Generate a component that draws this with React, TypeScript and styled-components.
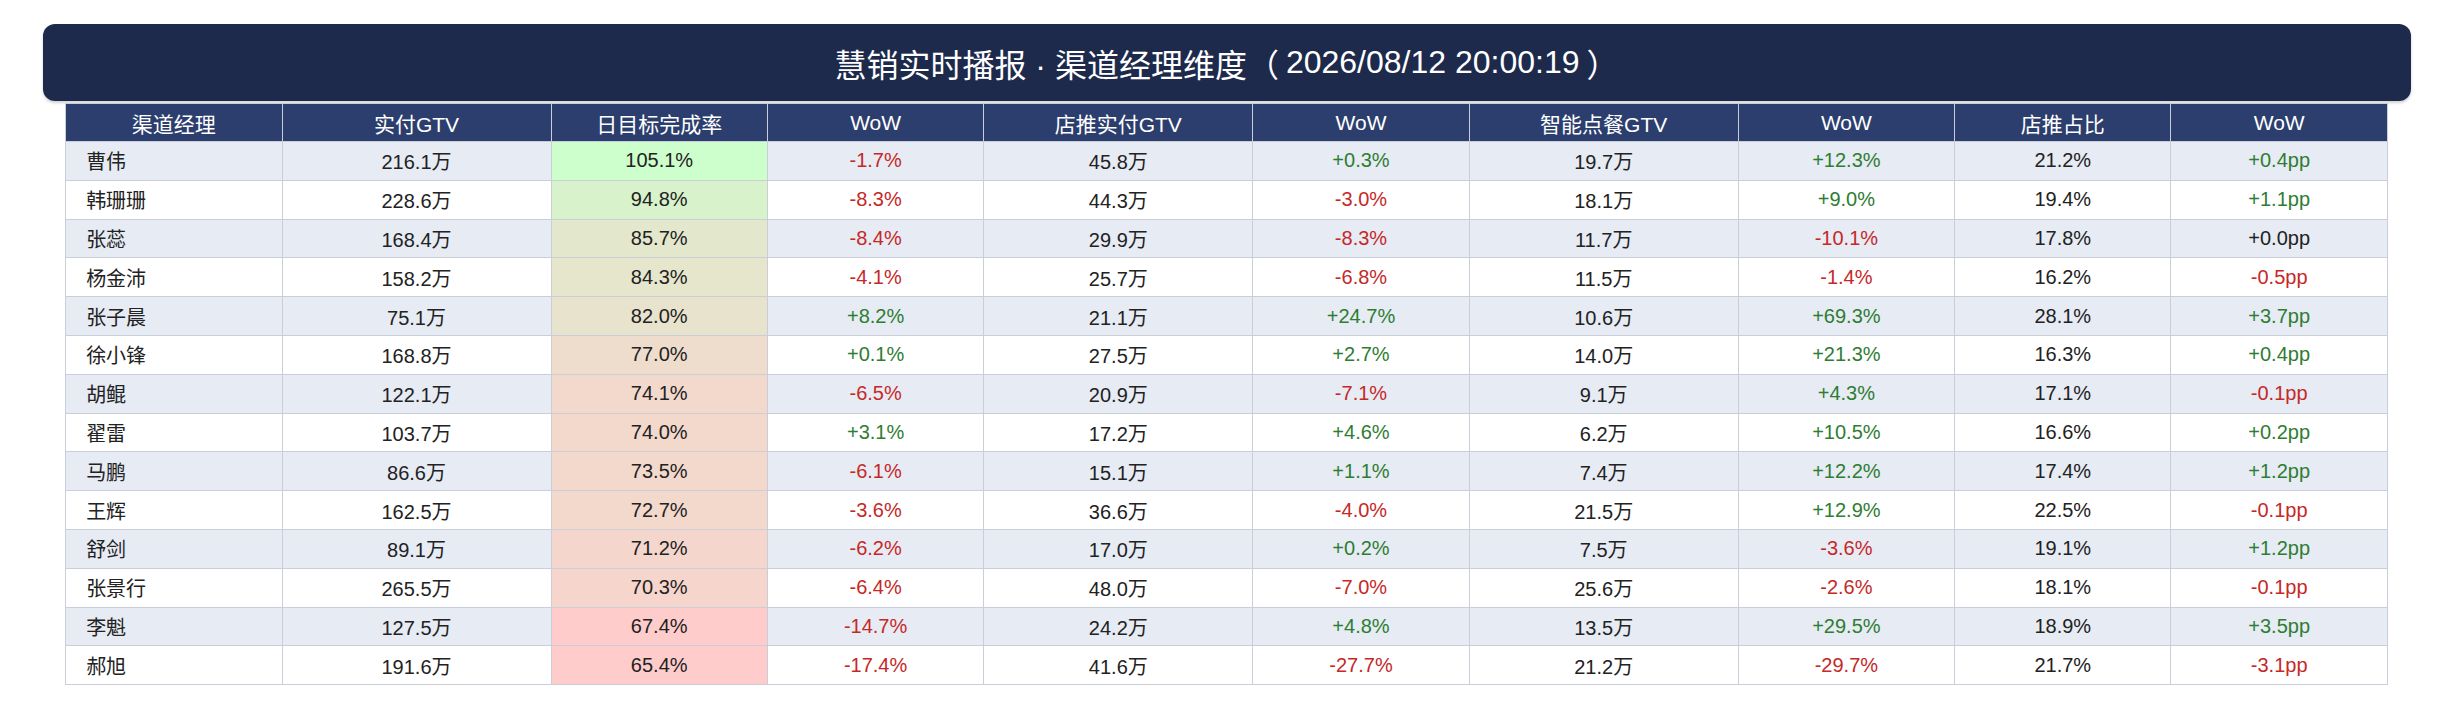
import styled, { createGlobalStyle } from "styled-components";

const GlobalStyle = createGlobalStyle`
    body {
        margin: 0;
        background: #ffffff;
        font-family: "Liberation Sans", "Noto Sans CJK SC", sans-serif;
    }
`;

const Page = styled.div`
    padding-top: 24px;
`;

const TitleBar = styled.div`
    width: 2368px;
    height: 77px;
    margin: 0 auto;
    display: flex;
    align-items: center;
    justify-content: center;
    background-color: #1d2a4b;
    border-radius: 12px;
    box-shadow: 0 2px 3px rgba(0, 0, 0, 0.18);
    color: #ffffff;
    font-size: 32px;
`;

// 全角括号与数字之间留点空隙
const Paren = styled.span<{ $close?: boolean }>`
    margin: ${(p) => (p.$close ? "0 0 0 7px" : "0 7px 0 0")};
`;

const Table = styled.table`
    width: 2322px;
    margin: 2px auto 0;
    border-collapse: collapse;
    table-layout: fixed;
    font-size: 20px;
`;

const HeadCell = styled.th`
    height: 37px;
    padding: 0;
    background-color: #2c3e6e;
    color: #ffffff;
    font-weight: normal;
    font-size: 21px;
    border: 1px solid #c9ced8;
    text-align: center;
`;

const Row = styled.tr<{ $striped: boolean }>`
    background-color: ${(p) => (p.$striped ? "#e6ebf4" : "#ffffff")};
`;

const Cell = styled.td<{ $tone?: "up" | "down" | "flat"; $bg?: string; $name?: boolean }>`
    height: 37.8px;
    padding: 0 ${(p) => (p.$name ? "20px" : "0")};
    border: 1px solid #c9ced8;
    text-align: ${(p) => (p.$name ? "left" : "center")};
    background-color: ${(p) => p.$bg ?? "transparent"};
    color: ${(p) =>
        p.$tone === "up" ? "#2e7d32" : p.$tone === "down" ? "#c62828" : "#222222"};
`;

const NARROW = 216.4;
const WIDE = 269;
const columns = [
    { label: "渠道经理", width: NARROW },
    { label: "实付GTV", width: WIDE },
    { label: "日目标完成率", width: NARROW },
    { label: "WoW", width: NARROW },
    { label: "店推实付GTV", width: WIDE },
    { label: "WoW", width: NARROW },
    { label: "智能点餐GTV", width: WIDE },
    { label: "WoW", width: NARROW },
    { label: "店推占比", width: NARROW },
    { label: "WoW", width: NARROW },
];

// name, gtv, rate, wow, storeGtv, wow, smartGtv, wow, share, wow
const rows: string[][] = [
    ["曹伟", "216.1万", "105.1%", "-1.7%", "45.8万", "+0.3%", "19.7万", "+12.3%", "21.2%", "+0.4pp"],
    ["韩珊珊", "228.6万", "94.8%", "-8.3%", "44.3万", "-3.0%", "18.1万", "+9.0%", "19.4%", "+1.1pp"],
    ["张蕊", "168.4万", "85.7%", "-8.4%", "29.9万", "-8.3%", "11.7万", "-10.1%", "17.8%", "+0.0pp"],
    ["杨金沛", "158.2万", "84.3%", "-4.1%", "25.7万", "-6.8%", "11.5万", "-1.4%", "16.2%", "-0.5pp"],
    ["张子晨", "75.1万", "82.0%", "+8.2%", "21.1万", "+24.7%", "10.6万", "+69.3%", "28.1%", "+3.7pp"],
    ["徐小锋", "168.8万", "77.0%", "+0.1%", "27.5万", "+2.7%", "14.0万", "+21.3%", "16.3%", "+0.4pp"],
    ["胡鲲", "122.1万", "74.1%", "-6.5%", "20.9万", "-7.1%", "9.1万", "+4.3%", "17.1%", "-0.1pp"],
    ["翟雷", "103.7万", "74.0%", "+3.1%", "17.2万", "+4.6%", "6.2万", "+10.5%", "16.6%", "+0.2pp"],
    ["马鹏", "86.6万", "73.5%", "-6.1%", "15.1万", "+1.1%", "7.4万", "+12.2%", "17.4%", "+1.2pp"],
    ["王辉", "162.5万", "72.7%", "-3.6%", "36.6万", "-4.0%", "21.5万", "+12.9%", "22.5%", "-0.1pp"],
    ["舒剑", "89.1万", "71.2%", "-6.2%", "17.0万", "+0.2%", "7.5万", "-3.6%", "19.1%", "+1.2pp"],
    ["张景行", "265.5万", "70.3%", "-6.4%", "48.0万", "-7.0%", "25.6万", "-2.6%", "18.1%", "-0.1pp"],
    ["李魁", "127.5万", "67.4%", "-14.7%", "24.2万", "+4.8%", "13.5万", "+29.5%", "18.9%", "+3.5pp"],
    ["郝旭", "191.6万", "65.4%", "-17.4%", "41.6万", "-27.7%", "21.2万", "-29.7%", "21.7%", "-3.1pp"],
];

// 完成率热力色：<70% 直接标红，其余按比例从红到绿
const rateColor = (rate: string) => {
    const v = parseFloat(rate);
    if (v < 70) return "#ffcccc";
    const t = Math.min(1, (v - 63) / 42);
    const r = Math.round(255 - 51 * t);
    const g = Math.round(204 + 51 * t);
    return `rgb(${r}, ${g}, 204)`;
};

const toneOf = (text: string) => {
    if (/^\+0\.0/.test(text)) return "flat";
    return text.startsWith("+") ? "up" : "down";
};

export default function App() {
    return (
        <Page>
            <GlobalStyle />
            <TitleBar>
                慧销实时播报 · 渠道经理维度<Paren>（</Paren>2026/08/12 20:00:19<Paren $close>）</Paren>
            </TitleBar>
            <Table>
                <colgroup>
                    {columns.map((c, i) => (
                        <col key={i} style={{ width: c.width }} />
                    ))}
                </colgroup>
                <thead>
                    <tr>
                        {columns.map((c, i) => (
                            <HeadCell key={i}>{c.label}</HeadCell>
                        ))}
                    </tr>
                </thead>
                <tbody>
                    {rows.map((r, ri) => (
                        <Row key={r[0]} $striped={ri % 2 === 0}>
                            {r.map((v, ci) => {
                                if (ci === 0) return <Cell key={ci} $name>{v}</Cell>;
                                if (ci === 2) return <Cell key={ci} $bg={rateColor(v)}>{v}</Cell>;
                                if (ci === 3 || ci === 5 || ci === 7 || ci === 9)
                                    return <Cell key={ci} $tone={toneOf(v)}>{v}</Cell>;
                                return <Cell key={ci}>{v}</Cell>;
                            })}
                        </Row>
                    ))}
                </tbody>
            </Table>
        </Page>
    );
}
